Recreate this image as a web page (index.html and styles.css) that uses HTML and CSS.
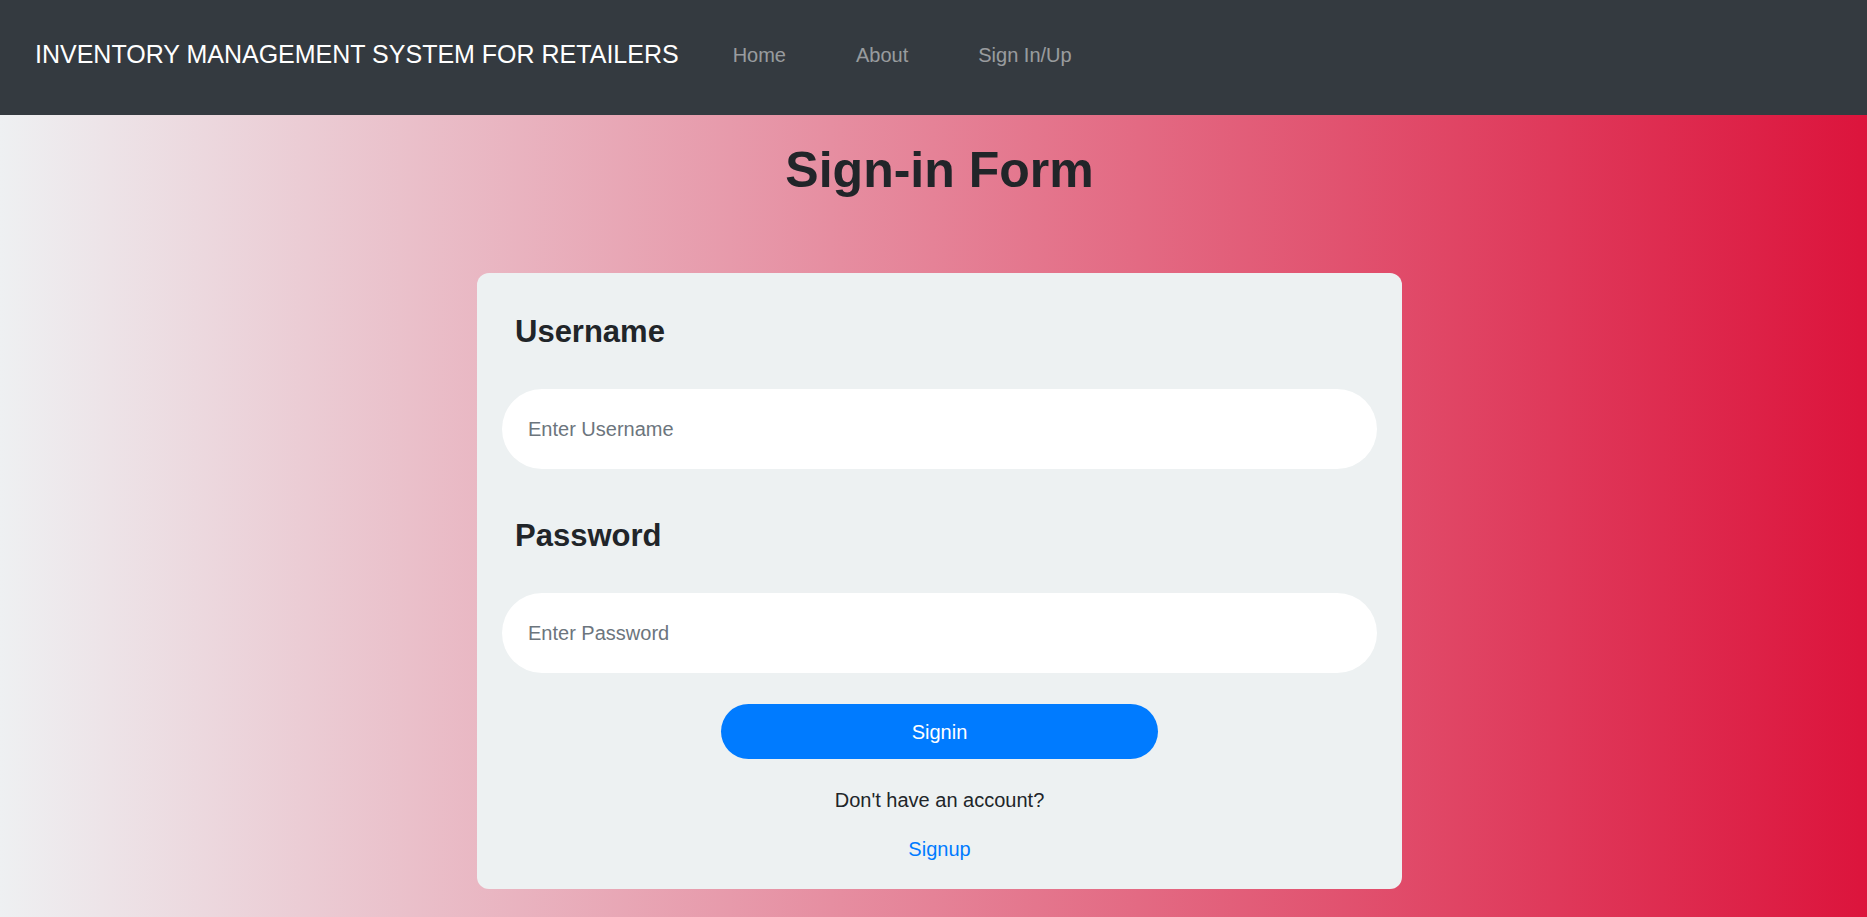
FILE: index.html
```html
<!DOCTYPE html>
<html lang="en">
<head>
<meta charset="utf-8">
<title>Sign-in</title>
<link rel="stylesheet" href="styles.css">
</head>
<body>
<nav class="navbar">
  <a class="brand" href="#">INVENTORY MANAGEMENT SYSTEM FOR RETAILERS</a>
  <ul class="nav-links">
    <li><a href="#">Home</a></li>
    <li><a href="#">About</a></li>
    <li><a href="#">Sign In/Up</a></li>
  </ul>
</nav>
<main class="page">
  <h1 class="title">Sign-in Form</h1>
  <form class="card">
    <div class="group">
      <label class="label" for="username">Username</label>
      <input class="field" id="username" type="text" placeholder="Enter Username">
    </div>
    <div class="group">
      <label class="label" for="password">Password</label>
      <input class="field" id="password" type="password" placeholder="Enter Password">
    </div>
    <button class="btn" type="button">Signin</button>
    <p class="note">Don't have an account?</p>
    <a class="signup" href="#">Signup</a>
  </form>
</main>
</body>
</html>
```
FILE: styles.css
```css
* { box-sizing: border-box; }

html, body {
  margin: 0;
  padding: 0;
  height: 100%;
}

body {
  font-family: "Liberation Sans", Arial, sans-serif;
  font-size: 20px;
  line-height: 1.5;
  color: #212529;
  background: #eef0f2;
  display: flex;
  flex-direction: column;
  overflow: hidden;
}

.navbar {
  height: 115px;
  flex: 0 0 115px;
  background: #343a40;
  display: flex;
  align-items: center;
  padding: 0 0 6px 35px;
}

.brand {
  color: #ffffff;
  text-decoration: none;
  font-size: 25px;
  line-height: 1.5;
  margin-right: 19px;
  white-space: nowrap;
}

.nav-links {
  list-style: none;
  margin: 0;
  padding: 0;
  display: flex;
}

.nav-links a {
  display: block;
  padding: 0 35px;
  color: rgba(255, 255, 255, 0.5);
  text-decoration: none;
  font-size: 20px;
  line-height: 1.5;
}

.page {
  flex: 1 1 auto;
  background: linear-gradient(to right, #eef0f2 0%, crimson 100%);
  padding: 25px 0 0 12px;
  display: flex;
  flex-direction: column;
  align-items: center;
}

.title {
  margin: 0 0 73px;
  font-size: 50px;
  line-height: 1.2;
  font-weight: 700;
  color: #212529;
}

.card {
  width: 925px;
  background: #edf1f2;
  border-radius: 12px;
  padding: 25px;
  display: flex;
  flex-direction: column;
  align-items: center;
}

.group {
  width: 100%;
  display: flex;
  flex-direction: column;
  margin-bottom: 48px;
}

.group:first-child { margin-top: 15px; }
.group:nth-child(2) { margin-bottom: 31px; }

.label {
  font-size: 31px;
  line-height: 1.2;
  font-weight: 700;
  margin: 0 0 39px 13px;
  color: #212529;
}

.field {
  width: 100%;
  height: 80px;
  border: none;
  border-radius: 40px;
  background: #ffffff;
  padding: 0 26px;
  font-family: "Liberation Sans", Arial, sans-serif;
  font-size: 20px;
  color: #495057;
  outline: none;
}

.field::placeholder { color: #6c757d; opacity: 1; }

.btn {
  width: 437px;
  height: 55px;
  border: none;
  border-radius: 28px;
  background: #007bff;
  color: #ffffff;
  font-family: "Liberation Sans", Arial, sans-serif;
  font-size: 20px;
  line-height: 1.5;
  margin-bottom: 26px;
  cursor: pointer;
}

.note {
  margin: 0 0 19px;
  font-size: 20px;
  line-height: 1.5;
}

.signup {
  color: #007bff;
  text-decoration: none;
  font-size: 20px;
  line-height: 1.5;
}
```
